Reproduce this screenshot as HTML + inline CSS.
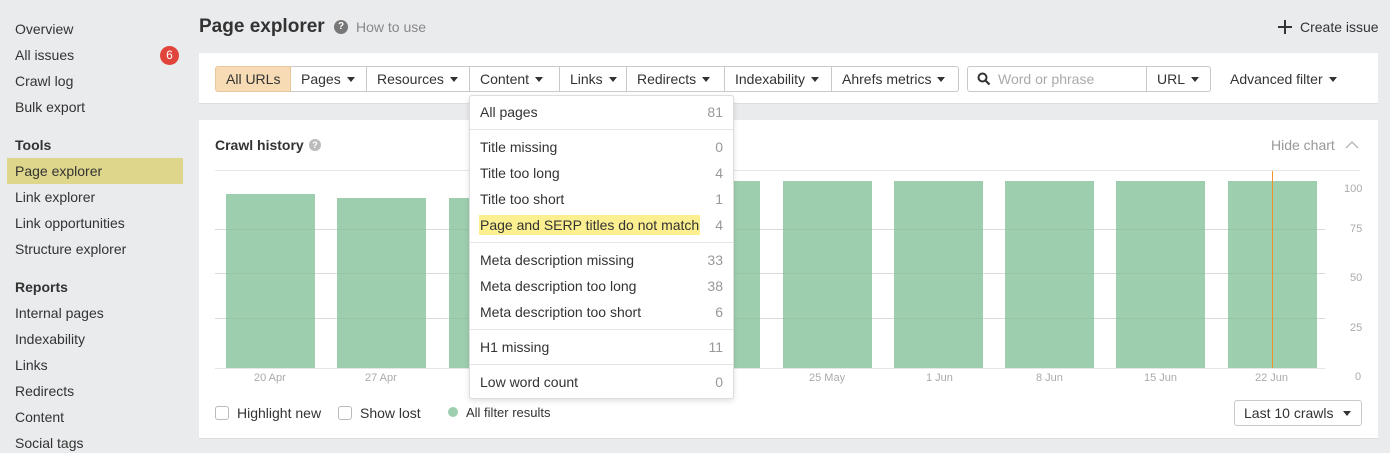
<!DOCTYPE html>
<html><head><meta charset="utf-8"><style>
*{box-sizing:border-box;margin:0;padding:0}
body{width:1390px;height:453px;overflow:hidden;background:#eaebed;font-family:"Liberation Sans",sans-serif;font-size:14px;color:#333;position:relative}
.a{position:absolute;white-space:nowrap}
.side div{position:absolute;left:15px}
.panel{position:absolute;background:#fff;border-bottom:1px solid #dcdde0}
.btn{position:absolute;top:66px;height:26px;border:1px solid #c9c9c9;border-left:none;background:#fff;font-size:14px;line-height:24px;padding-left:10px}
.car{display:inline-block;width:0;height:0;border-left:4px solid transparent;border-right:4px solid transparent;border-top:5px solid #333;vertical-align:middle;margin-left:6px;margin-top:-2px}
.bar{position:absolute;background:#9dcfaf;bottom:85px;width:89px}
.gl{position:absolute;left:215px;width:1110px;height:1px;background:#e6e6e6}
.dd div.i{position:absolute;left:10px;right:10px;height:22px;line-height:22px}
.dd span.n{position:absolute;right:0;color:#999}
.sep{position:absolute;left:0;right:0;height:1px;background:#e5e5e5}
.cb{display:inline-block;width:14px;height:14px;border:1px solid #bbb;border-radius:3px;vertical-align:middle;margin-right:8px;margin-top:-3px}
</style></head><body>
<div class="side">
<div style="top:21px">Overview</div>
<div style="top:47px">All issues</div>
<div style="top:73px">Crawl log</div>
<div style="top:99px">Bulk export</div>
<div style="top:137px;font-weight:bold">Tools</div>
<div style="top:158px;left:7px;width:176px;height:26px;background:#ddd68b"></div>
<div style="top:163px">Page explorer</div>
<div style="top:189px">Link explorer</div>
<div style="top:215px">Link opportunities</div>
<div style="top:241px">Structure explorer</div>
<div style="top:279px;font-weight:bold">Reports</div>
<div style="top:305px">Internal pages</div>
<div style="top:331px">Indexability</div>
<div style="top:357px">Links</div>
<div style="top:383px">Redirects</div>
<div style="top:409px">Content</div>
<div style="top:435px">Social tags</div>
</div>
<div class="a" style="left:160px;top:46px;width:19px;height:19px;border-radius:50%;background:#e0443a;color:#fff;font-size:12px;text-align:center;line-height:19px">6</div>

<div class="a" style="left:199px;top:16px;font-size:19px;font-weight:bold;color:#333">Page explorer</div>
<div class="a" style="left:334px;top:20px;width:14px;height:14px;border-radius:50%;background:#777;color:#fff;font-size:10px;font-weight:bold;text-align:center;line-height:14px">?</div>
<div class="a" style="left:356px;top:19px;color:#888">How to use</div>
<svg class="a" style="left:1278px;top:20px" width="14" height="14"><path d="M7 0V14M0 7H14" stroke="#333" stroke-width="2"/></svg>
<div class="a" style="left:1300px;top:19px">Create issue</div>

<div class="panel" style="left:199px;top:53px;width:1179px;height:51px"></div>
<div class="btn" style="left:215px;width:76px;background:#f7dbb5;border:1px solid #e8c89a;border-radius:3px 0 0 3px">All URLs</div>
<div class="btn" style="left:291px;width:76px">Pages<span class="car"></span></div>
<div class="btn" style="left:367px;width:103px">Resources<span class="car"></span></div>
<div class="btn" style="left:470px;width:90px">Content<span class="car"></span></div>
<div class="btn" style="left:560px;width:67px">Links<span class="car"></span></div>
<div class="btn" style="left:627px;width:98px">Redirects<span class="car"></span></div>
<div class="btn" style="left:725px;width:107px">Indexability<span class="car"></span></div>
<div class="btn" style="left:832px;width:127px;border-radius:0 3px 3px 0">Ahrefs metrics<span class="car"></span></div>
<div class="btn" style="left:967px;width:180px;border-left:1px solid #c9c9c9;border-radius:3px 0 0 3px;color:#aaa;padding-left:30px">Word or phrase</div>
<svg class="a" style="left:977px;top:72px" width="14" height="14" viewBox="0 0 14 14"><circle cx="5.5" cy="5.5" r="4" fill="none" stroke="#333" stroke-width="2"/><path d="M8.5 8.5L12.5 12.5" stroke="#333" stroke-width="2.2"/></svg>
<div class="btn" style="left:1147px;width:64px;border-radius:0 3px 3px 0">URL<span class="car"></span></div>
<div class="a" style="left:1230px;top:71px">Advanced filter<span class="car"></span></div>

<div class="panel" style="left:199px;top:120px;width:1179px;height:319px"></div>
<div class="a" style="left:215px;top:137px;font-weight:bold">Crawl history</div>
<div class="a" style="left:309px;top:139px;width:12px;height:12px;border-radius:50%;background:#bbb;color:#fff;font-size:9px;font-weight:bold;text-align:center;line-height:12px">?</div>
<div class="a" style="left:1271px;top:137px;color:#999">Hide chart</div>
<svg class="a" style="left:1345px;top:140px" width="14" height="9"><path d="M1 8L7 2L13 8" fill="none" stroke="#bbb" stroke-width="1.5"/></svg>
<div class="gl" style="top:170px;width:1145px;background:#e8e8e8"></div>
<div class="gl" style="top:229px"></div><div class="gl" style="top:273px"></div><div class="gl" style="top:318px"></div><div class="gl" style="top:368px"></div>
<div class="bar" style="left:226px;top:194px"></div>
<div class="bar" style="left:337px;top:198px"></div>
<div class="bar" style="left:449px;top:198px"></div>
<div class="bar" style="left:560px;top:181px"></div>
<div class="bar" style="left:671px;top:181px"></div>
<div class="bar" style="left:783px;top:181px"></div>
<div class="bar" style="left:894px;top:181px"></div>
<div class="bar" style="left:1005px;top:181px"></div>
<div class="bar" style="left:1116px;top:181px"></div>
<div class="bar" style="left:1228px;top:181px"></div>
<div class="gl" style="top:229px;background:rgba(0,0,0,.05)"></div><div class="gl" style="top:273px;background:rgba(0,0,0,.05)"></div><div class="gl" style="top:318px;background:rgba(0,0,0,.05)"></div>
<div class="a" style="left:1272px;top:171px;width:1px;height:197px;background:#f0932b"></div>
<div class="a" style="left:1344px;top:183px;font-size:11px;color:#aaa">100</div>
<div class="a" style="left:1350px;top:223px;font-size:11px;color:#aaa">75</div>
<div class="a" style="left:1350px;top:272px;font-size:11px;color:#aaa">50</div>
<div class="a" style="left:1350px;top:322px;font-size:11px;color:#aaa">25</div>
<div class="a" style="left:1355px;top:371px;font-size:11px;color:#aaa">0</div>
<div class="a" style="left:254px;top:372px;font-size:11px;color:#aaa">20 Apr</div>
<div class="a" style="left:365px;top:372px;font-size:11px;color:#aaa">27 Apr</div>
<div class="a" style="left:809px;top:372px;font-size:11px;color:#aaa">25 May</div>
<div class="a" style="left:926px;top:372px;font-size:11px;color:#aaa">1 Jun</div>
<div class="a" style="left:1036px;top:372px;font-size:11px;color:#aaa">8 Jun</div>
<div class="a" style="left:1144px;top:372px;font-size:11px;color:#aaa">15 Jun</div>
<div class="a" style="left:1255px;top:372px;font-size:11px;color:#aaa">22 Jun</div>
<div class="a" style="left:215px;top:405px"><span class="cb"></span>Highlight new</div>
<div class="a" style="left:338px;top:405px"><span class="cb"></span>Show lost</div>
<div class="a" style="left:448px;top:407px;width:10px;height:10px;border-radius:50%;background:#9dcfaf"></div>
<div class="a" style="left:466px;top:405px;font-size:13px">All filter results</div>
<div class="a" style="left:1234px;top:400px;width:128px;height:26px;border:1px solid #c9c9c9;border-radius:3px;background:#fff;line-height:24px;padding-left:9px">Last 10 crawls<span class="car" style="margin-left:10px"></span></div>

<div class="a dd" style="left:469px;top:95px;width:265px;height:304px;background:#fff;border:1px solid #ddd;border-radius:3px;box-shadow:0 2px 6px rgba(0,0,0,.12)">
<div class="i" style="top:5px">All pages<span class="n">81</span></div>
<div class="sep" style="top:33px"></div>
<div class="i" style="top:40px">Title missing<span class="n">0</span></div>
<div class="i" style="top:66px">Title too long<span class="n">4</span></div>
<div class="i" style="top:92px">Title too short<span class="n">1</span></div>
<div class="i" style="top:118px"><span style="background:#fbef8f;padding:2px 1px;margin-left:-1px">Page and SERP titles do not match</span><span class="n">4</span></div>
<div class="sep" style="top:146px"></div>
<div class="i" style="top:153px">Meta description missing<span class="n">33</span></div>
<div class="i" style="top:179px">Meta description too long<span class="n">38</span></div>
<div class="i" style="top:205px">Meta description too short<span class="n">6</span></div>
<div class="sep" style="top:233px"></div>
<div class="i" style="top:240px">H1 missing<span class="n">11</span></div>
<div class="sep" style="top:268px"></div>
<div class="i" style="top:275px">Low word count<span class="n">0</span></div>
</div>
</body></html>
